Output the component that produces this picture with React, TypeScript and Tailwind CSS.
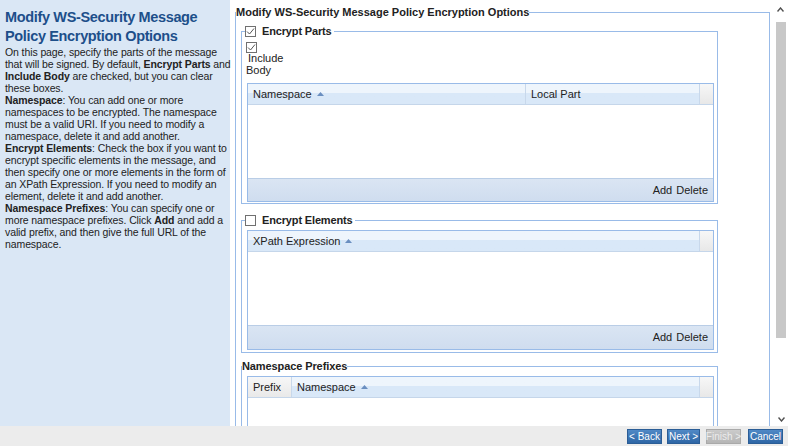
import React from "react";

const sans = { fontFamily: '"Liberation Sans", Arial, sans-serif' };

function Check({ checked }: { checked?: boolean }) {
  return (
    <span className="flex h-[11px] w-[11px] shrink-0 items-center justify-center border border-[#707070] bg-white">
      {checked && (
        <svg width="9" height="9" viewBox="0 0 9 9">
          <path d="M1 4.5 L3.5 7 L8 1.5" fill="none" stroke="#555" strokeWidth="1" />
        </svg>
      )}
    </span>
  );
}

function SortArrow() {
  return (
    <svg width="7" height="4" viewBox="0 0 7 4" className="ml-[5px] inline-block">
      <path d="M0 4 L3.5 0 L7 4 Z" fill="#6a8fc0" />
    </svg>
  );
}

type Col = { label: string; w?: string; gray?: boolean; sort?: boolean };

function GridHeader({ cols }: { cols: Col[] }) {
  return (
    <div className="flex h-[21px] border-b border-[#c5d6ea] text-[11px] text-[#222]">
      {cols.map((c, i) => (
        <div
          key={i}
          className={`flex items-center border-r border-[#c8d8eb] px-[5px] ${c.w ?? "flex-1"} ${
            c.gray
              ? "bg-gradient-to-b from-[#f7f7f7] to-[#e9e9e9]"
              : "bg-gradient-to-b from-[#eef5fc] from-45% to-[#d9e8f8] to-45%"
          }`}
        >
          {c.label}
          {c.sort && <SortArrow />}
        </div>
      ))}
      <div className="w-[13px] bg-gradient-to-b from-[#f7f7f7] to-[#e8e8e8]" />
    </div>
  );
}

function Toolbar({ h }: { h: string }) {
  return (
    <div
      className={`flex ${h} items-center justify-end gap-[4px] border-t border-[#b9cde6] bg-gradient-to-b from-[#dae5f3] to-[#cfddef] pr-[5px] text-[11px] text-[#222]`}
    >
      <span>Add</span>
      <span>Delete</span>
    </div>
  );
}

function Btn({ label, w, disabled }: { label: string; w: string; disabled?: boolean }) {
  return (
    <button
      className={`flex h-[15px] ${w} items-center justify-center whitespace-nowrap border text-[10px] leading-[13px] ${
        disabled
          ? "border-[#a9a9a9] bg-gradient-to-b from-[#cbcbcb] to-[#b5b5b5] text-[#ececec]"
          : "border-[#2b5d96] bg-gradient-to-b from-[#5089c6] to-[#2e66a5] text-white"
      }`}
    >
      {label}
    </button>
  );
}

const help: React.ReactNode[] = [
  "On this page, specify the parts of the message",
  <>
    that will be signed. By default, <b>Encrypt Parts</b> and
  </>,
  <>
    <b>Include Body</b> are checked, but you can clear
  </>,
  "these boxes.",
  <>
    <b>Namespace</b>: You can add one or more
  </>,
  "namespaces to be encrypted. The namespace",
  "must be a valid URI. If you need to modify a",
  "namespace, delete it and add another.",
  <>
    <b>Encrypt Elements</b>: Check the box if you want to
  </>,
  "encrypt specific elements in the message, and",
  "then specify one or more elements in the form of",
  "an XPath Expression. If you need to modify an",
  "element, delete it and add another.",
  <>
    <b>Namespace Prefixes</b>: You can specify one or
  </>,
  <>
    more namespace prefixes. Click <b>Add</b> and add a
  </>,
  "valid prefix, and then give the full URL of the",
  "namespace.",
];

export default function App() {
  return (
    <div className="flex h-[446px] w-[788px] flex-col overflow-hidden bg-white text-[#222]" style={sans}>
      <div className="flex min-h-0 flex-1">
        <aside className="w-[230px] shrink-0 bg-[#dae7f5] pl-[5px] pt-[8px]">
          <h1 className="text-[14.5px] font-bold leading-[19px] tracking-[-0.35px] text-[#1d4f8a]">
            Modify WS-Security Message
            <br />
            Policy Encryption Options
          </h1>
          <div className="text-[10.5px] leading-[12px] tracking-[-0.1px] text-[#222]">
            {help.map((l, i) => (
              <div key={i} className="whitespace-nowrap">
                {l}
              </div>
            ))}
          </div>
        </aside>

        <main className="min-w-0 flex-1 overflow-hidden pl-[5px] pt-[5px]">
          <fieldset className="w-[535px] border border-[#99bbe8] pb-[10px]">
            <legend className="text-[11px] font-bold leading-[14px] text-[#222]">
              Modify WS-Security Message Policy Encryption Options
            </legend>

            <fieldset className="ml-[5px] mt-[5px] w-[477px] border border-[#99bbe8] pb-[1px]">
              <legend className="ml-[3px] flex h-[14px] items-center gap-[6px] pr-[2px] text-[11px] font-bold leading-[14px] tracking-[-0.15px]">
                <Check checked />
                <span>Encrypt Parts</span>
              </legend>
              <div className="ml-[4px] mt-[4px] w-[44px] text-[11px] leading-[12px]">
                <Check checked />
                <div className="-mt-[1px] pl-[2px]">Include</div>
                <div>Body</div>
              </div>
              <div className="ml-[5px] mr-[3px] mt-[7px] border border-[#99bbe8] bg-white">
                <GridHeader
                  cols={[
                    { label: "Namespace", w: "w-[278px]", sort: true },
                    { label: "Local Part", w: "flex-1" },
                  ]}
                />
                <div className="h-[73px]" />
                <Toolbar h="h-[23px]" />
              </div>
            </fieldset>

            <fieldset className="ml-[5px] mt-[9px] w-[477px] border border-[#99bbe8] pb-[2px]">
              <legend className="ml-[3px] flex h-[14px] items-center gap-[6px] pr-[2px] text-[11px] font-bold leading-[14px] tracking-[-0.15px]">
                <Check />
                <span>Encrypt Elements</span>
              </legend>
              <div className="ml-[5px] mr-[3px] mt-[3px] border border-[#99bbe8] bg-white">
                <GridHeader cols={[{ label: "XPath Expression", w: "flex-1", sort: true }]} />
                <div className="h-[73px]" />
                <Toolbar h="h-[24px]" />
              </div>
            </fieldset>

            <fieldset className="ml-[5px] mt-[6px] w-[477px] border border-[#99bbe8] pb-[1px]">
              <legend className="text-[11px] font-bold leading-[14px] tracking-[-0.1px]">Namespace Prefixes</legend>
              <div className="ml-[5px] mr-[3px] mt-[3px] border border-[#99bbe8] bg-white">
                <GridHeader
                  cols={[
                    { label: "Prefix", w: "w-[44px]", gray: true },
                    { label: "Namespace", w: "flex-1", sort: true },
                  ]}
                />
                <div className="h-[60px]" />
              </div>
            </fieldset>
          </fieldset>
        </main>

        <div className="flex w-[17px] shrink-0 flex-col bg-white">
          <div className="flex h-[18px] items-center justify-center pl-[2px]">
            <svg width="7" height="5" viewBox="0 0 7 5">
              <path d="M0.5 4.5 L3.5 1 L6.5 4.5" fill="none" stroke="#505050" strokeWidth="1.4" />
            </svg>
          </div>
          <div className="ml-[5px] mt-[4px] h-[316px] w-[10px] bg-[#c8c8c8]" />
          <div className="flex-1" />
          <div className="flex h-[14px] items-center justify-center pl-[4px]">
            <svg width="7" height="5" viewBox="0 0 7 5">
              <path d="M0.5 0.5 L3.5 4 L6.5 0.5" fill="none" stroke="#505050" strokeWidth="1.4" />
            </svg>
          </div>
        </div>
      </div>

      <footer className="flex h-[20px] shrink-0 items-center justify-end bg-[#ececec] pr-[5px]">
        <Btn label="< Back" w="w-[35px]" />
        <div className="w-[5px]" />
        <Btn label="Next >" w="w-[33px]" />
        <div className="w-[6px]" />
        <Btn label="Finish >" w="w-[35px]" disabled />
        <div className="w-[7px]" />
        <Btn label="Cancel" w="w-[35px]" />
      </footer>
    </div>
  );
}
